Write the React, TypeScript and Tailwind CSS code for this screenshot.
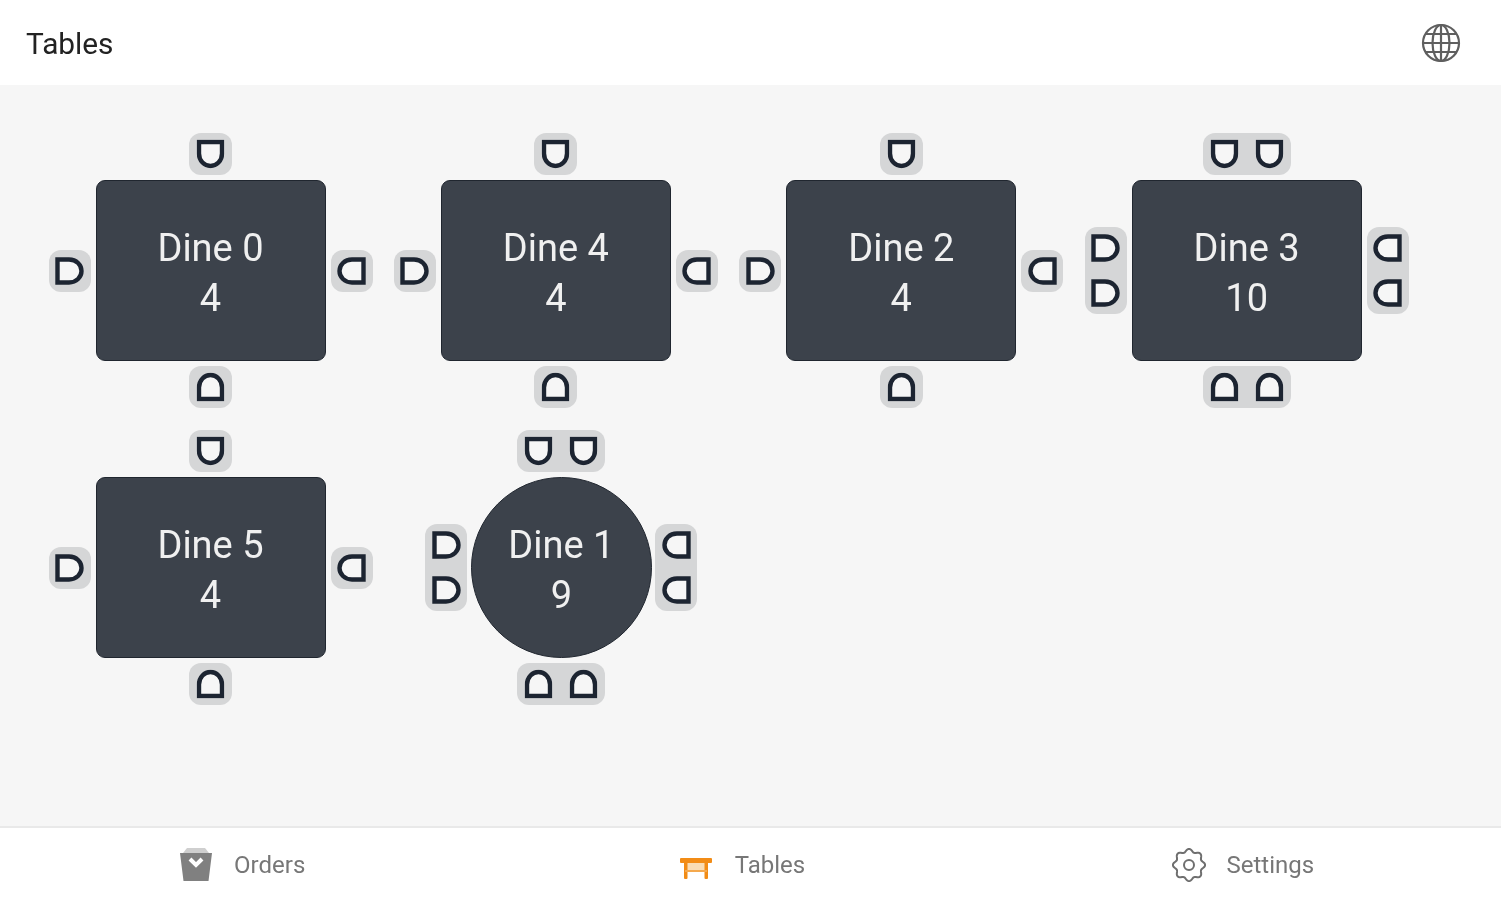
type Side = "left" | "right" | "top" | "bottom";
const rot: Record<Side, string> = { left: "rotate-0", top: "rotate-90", right: "rotate-180", bottom: "-rotate-90" };

function Chair({ side }: { side: Side }) {
  return (
    <svg viewBox="0 0 29 28" className={`w-[29px] h-[28px] ${rot[side]}`} fill="none">
      <path d="M2.5 2.5 H14 C21.5 2.5 26.5 8 26.5 14 C26.5 20 21.5 25.5 14 25.5 H2.5 Z" stroke="#1c2431" strokeWidth="4.4" strokeLinejoin="miter" fill="#f6f6f6" />
    </svg>
  );
}

function Seats({ side, count }: { side: Side; count: number }) {
  const vertical = side === "left" || side === "right";
  return (
    <div className={`flex items-center justify-center bg-[#d5d6d7] rounded-[12px] ${vertical ? "flex-col w-[42px] py-[7px] gap-[17px]" : "h-[42px] px-[7px] gap-[16px]"}`}>
      {Array.from({ length: count }).map((_, i) => (
        <Chair key={i} side={side} />
      ))}
    </div>
  );
}

function Table({ name, total, v = 1, h = 1, round = false }: { name: string; total: number; v?: number; h?: number; round?: boolean }) {
  return (
    <div className={round ? "grid grid-cols-[43px_181px_43px] grid-rows-[42px_181px_42px] gap-x-[3px] gap-y-[5px] ml-[31px]" : "grid grid-cols-[42px_230px_42px] grid-rows-[42px_181px_42px] gap-[5px]"}>
      <div />
      <div className="flex justify-center items-center"><Seats side="top" count={v} /></div>
      <div />
      <div className="flex justify-center items-center"><Seats side="left" count={h} /></div>
      <div className={`bg-[#3c424b] border border-[#20262f] flex flex-col items-center justify-center pt-[5px] text-[#f0f0f0] text-[38px] leading-[50px] ${round ? "rounded-full" : "rounded-[9px]"}`}>
        <span>{name}</span>
        <span>{total}</span>
      </div>
      <div className="flex justify-center items-center"><Seats side="right" count={h} /></div>
      <div />
      <div className="flex justify-center items-center"><Seats side="bottom" count={v} /></div>
      <div />
    </div>
  );
}

function Globe() {
  return (
    <svg viewBox="0 0 40 40" className="w-[40px] h-[40px] blur-[0.5px]" fill="none" stroke="#5f5f5f" strokeWidth="2.2">
      <circle cx="20" cy="20" r="18" />
      <ellipse cx="20" cy="20" rx="8.5" ry="18" />
      <path d="M20 2V38M2 20H38M5 11H35M5 29H35" />
    </svg>
  );
}

function BagIcon() {
  return (
    <svg viewBox="0 0 34 35" className="w-[34px] h-[35px] blur-[0.6px]">
      <path d="M4 6 L8 1 H26 L30 6 Z" fill="#cfcfcf" />
      <path d="M1 6 H33 L29.5 34 H4.5 Z" fill="#808080" />
      <path d="M11 12 L17 18 L23 12" fill="none" stroke="#ffffff" strokeWidth="4" />
    </svg>
  );
}

function TableIcon() {
  return (
    <svg viewBox="0 0 32 21" className="w-[32px] h-[21px] mt-[8px] blur-[0.5px]">
      <rect x="4" y="5" width="24" height="8" fill="#f9dcb4" />
      <rect x="0" y="0" width="32" height="5" fill="#f28c16" rx="1" />
      <rect x="4" y="3" width="3.5" height="18" fill="#f28c16" rx="1" />
      <rect x="24.5" y="3" width="3.5" height="18" fill="#f28c16" rx="1" />
      <rect x="5" y="12" width="22" height="2" fill="#f5a94e" />
    </svg>
  );
}

function GearIcon() {
  const pts = Array.from({ length: 97 }).map((_, i) => {
    const t = (i / 96) * Math.PI * 2;
    const r = 14.6 + 1.5 * Math.cos(8 * t);
    return `${(17 + r * Math.sin(t)).toFixed(2)} ${(17 - r * Math.cos(t)).toFixed(2)}`;
  });
  return (
    <svg viewBox="0 0 34 34" className="w-[34px] h-[34px] blur-[0.5px] mt-[2px]" fill="none" stroke="#6f6f6f" strokeWidth="2">
      <path d={`M${pts.join("L")}Z`} />
      <circle cx="17" cy="17" r="5" />
    </svg>
  );
}

function NavItem({ icon, label, gap }: { icon: React.ReactNode; label: string; gap: string }) {
  return (
    <div className={`flex flex-1 items-center justify-center pr-[16px] ${gap}`}>
      {icon}
      <span className="text-[24px] text-[#777777] leading-none mt-[1px] blur-[0.6px]">{label}</span>
    </div>
  );
}

export default function App() {
  return (
    <div className="w-[1501px] h-[900px] flex flex-col bg-white overflow-hidden font-['Roboto',sans-serif]">
      <header className="h-[85px] flex items-center justify-between pl-[26px] pr-[40px] bg-white">
        <h1 className="text-[29.8px] text-[#222222] leading-none mt-[2px] font-normal blur-[0.4px]">Tables</h1>
        <Globe />
      </header>
      <main className="flex-1 bg-[#f6f6f6] pl-[48.5px] pt-[48px]">
        <div className="flex flex-wrap gap-x-[21.4px] gap-y-[22px] content-start blur-[0.5px]">
          <Table name="Dine 0" total={4} />
          <Table name="Dine 4" total={4} />
          <Table name="Dine 2" total={4} />
          <Table name="Dine 3" total={10} v={2} h={2} />
          <Table name="Dine 5" total={4} />
          <Table name="Dine 1" total={9} v={2} h={2} round />
        </div>
      </main>
      <nav className="h-[74px] border-t-2 border-[#e9e9e9] bg-white flex items-center">
        <NavItem icon={<BagIcon />} label="Orders" gap="gap-[21px]" />
        <NavItem icon={<TableIcon />} label="Tables" gap="gap-[23px]" />
        <NavItem icon={<GearIcon />} label="Settings" gap="gap-[21px]" />
      </nav>
    </div>
  );
}
